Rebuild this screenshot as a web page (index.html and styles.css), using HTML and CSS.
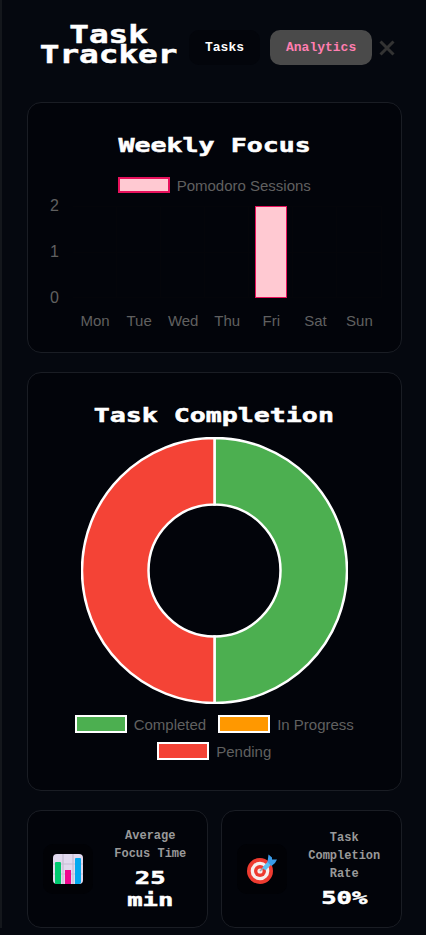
FILE: index.html
```html
<!DOCTYPE html>
<html>

<head>
    <meta charset="UTF-8">
    <meta name="viewport" content="width=device-width, initial-scale=1.0">
    <title>Task Tracker</title>
    <link rel="stylesheet" href="styles.css">
</head>

<body>
    <div class="app">
        <header class="top-bar">
            <div class="logo-box">
                <h1 class="logo">Task<br>Tracker</h1>
            </div>
            <nav class="tabs">
                <button class="tab">Tasks</button>
                <button class="tab active">Analytics</button>
            </nav>
            <svg class="close-icon" viewBox="0 0 16 16" width="16" height="16">
                <path d="M1.5 1.5 L14.5 14.5 M14.5 1.5 L1.5 14.5" />
            </svg>
        </header>

        <!-- Weekly bar chart -->
        <section class="card focus-card">
            <h2 class="card-title">Weekly Focus</h2>
            <div class="legend">
                <div class="legend-item">
                    <span class="swatch swatch-pink"></span>Pomodoro Sessions
                </div>
            </div>
            <div class="bar-chart">
                <div class="y-axis">
                    <span>2</span>
                    <span>1</span>
                    <span>0</span>
                </div>
                <div class="plot">
                    <div class="day"></div>
                    <div class="day"></div>
                    <div class="day"></div>
                    <div class="day"></div>
                    <div class="day"><div class="bar"></div></div>
                    <div class="day"></div>
                    <div class="day"></div>
                </div>
                <div class="corner"></div>
                <div class="x-axis">
                    <span>Mon</span>
                    <span>Tue</span>
                    <span>Wed</span>
                    <span>Thu</span>
                    <span>Fri</span>
                    <span>Sat</span>
                    <span>Sun</span>
                </div>
            </div>
        </section>

        <!-- Completion doughnut -->
        <section class="card completion-card">
            <h2 class="card-title">Task Completion</h2>
            <svg class="donut" viewBox="0 0 267 267" width="267" height="267">
                <path class="slice-green" d="M133.5 1 A132.5 132.5 0 0 1 133.5 266 L133.5 199.5 A66 66 0 0 0 133.5 67.5 Z" />
                <path class="slice-red" d="M133.5 266 A132.5 132.5 0 0 1 133.5 1 L133.5 67.5 A66 66 0 0 0 133.5 199.5 Z" />
            </svg>
            <div class="legend legend-wrap">
                <div class="legend-item">
                    <span class="swatch swatch-green"></span>Completed
                </div>
                <div class="legend-item">
                    <span class="swatch swatch-orange"></span>In Progress
                </div>
                <div class="legend-item">
                    <span class="swatch swatch-red"></span>Pending
                </div>
            </div>
        </section>

        <div class="stats">
            <section class="card stat-card">
                <div class="stat-icon">
                    <svg viewBox="0 0 30 30" width="30" height="30">
                        <rect x="0" y="0" width="30" height="30" rx="4" fill="#e1d9ee" />
                        <path d="M0 10 H30 M0 20 H30 M10 0 V30 M20 0 V30" stroke="#c5bdd3" stroke-width="1.2" />
                        <path d="M2 30 V9 Q2 8 3 8 H7 Q8 8 8 9 V30 Z" fill="#00c96f" />
                        <rect x="12" y="16" width="6" height="14" fill="#f0078f" />
                        <path d="M22 30 V5 Q22 4 23 4 H27 Q28 4 28 5 V28 Q28 30 26 30 Z" fill="#03a9f0" />
                    </svg>
                </div>
                <div class="stat-text">
                    <p class="stat-label">Average Focus Time</p>
                    <p class="stat-value">25<br>min</p>
                </div>
            </section>
            <section class="card stat-card">
                <div class="stat-icon">
                    <svg viewBox="0 0 30 30" width="30" height="30">
                        <circle cx="13" cy="17" r="13" fill="#ee3b30" />
                        <circle cx="13" cy="17" r="9.3" fill="#f6efee" />
                        <circle cx="13" cy="17" r="6" fill="#ee3b30" />
                        <circle cx="13" cy="17" r="2.6" fill="#f6efee" />
                        <path d="M13 17 L19 11.5" stroke="#8fa9ba" stroke-width="1.6" />
                        <path d="M15.5 13.5 L23 5 L26 8.5 L18.5 16.5 Z" fill="#5cc0f2" />
                        <path d="M20.5 8 L21.5 0.5 L25 3.5 L25 5.5 L30 5.5 L28 9 L24.5 12 Z" fill="#3a9be8" />
                    </svg>
                </div>
                <div class="stat-text">
                    <p class="stat-label">Task Completion Rate</p>
                    <p class="stat-value">50%</p>
                </div>
            </section>
        </div>
    </div>
</body>

</html>
```

FILE: styles.css
```css
/* Basic reset */
* {
    margin: 0;
    padding: 0;
    box-sizing: border-box;
}

html,
body {
    overflow: hidden;
}

body {
    background-color: #05080f;
    border-left: 2px solid #14171c;
    color: #fff;
    font-family: "Liberation Sans", Arial, sans-serif;
}

.app {
    display: flex;
    flex-direction: column;
    gap: 19px;
    padding: 0 24.5px 0 25px;
}

/* Header */
.top-bar {
    display: flex;
    align-items: center;
    height: 95px;
    margin-bottom: -12px;
    padding-left: 13px;
}

.logo-box {
    display: flex;
    justify-content: center;
    width: 138px;
    margin-bottom: 5px;
}

.logo {
    font-family: "DejaVu Sans Mono", monospace;
    font-size: 24px;
    font-weight: 700;
    line-height: 20px;
    text-align: center;
    white-space: nowrap;
    transform: scaleX(1.36);
    -webkit-text-stroke: 0.5px #fff;
}

.tabs {
    display: flex;
    gap: 10px;
    margin-left: 11px;
}

.tab {
    height: 35px;
    padding: 0 16px;
    background-color: #03050b;
    border: none;
    border-radius: 10px;
    color: #fff;
    font-family: "Liberation Mono", monospace;
    font-size: 13px;
    font-weight: 700;
}

.tab.active {
    background-color: #4a4a4a;
    color: #ff7eb0;
}

.close-icon {
    margin-left: 7px;
    fill: none;
    stroke: #333;
    stroke-width: 3;
}

/* Cards */
.card {
    background-color: #02040a;
    border: 1px solid #1a1d24;
    border-radius: 14px;
}

.card-title {
    width: fit-content;
    margin: 0 auto;
    font-family: "DejaVu Sans Mono", monospace;
    font-size: 19px;
    font-weight: 700;
    line-height: 22px;
    text-align: center;
    transform: scaleX(1.4);
    -webkit-text-stroke: 0.5px #fff;
}

.focus-card {
    height: 251px;
    padding-top: 31px;
}

.completion-card {
    height: 419px;
    padding-top: 31px;
}

/* Legends */
.legend {
    display: flex;
    justify-content: center;
    margin-top: 17px;
    font-size: 15px;
    color: #606060;
}

.legend-wrap {
    flex-wrap: wrap;
    gap: 3px 12px;
    margin-top: 8px;
    padding: 0 20px;
}

.legend-item {
    display: flex;
    align-items: center;
    gap: 7px;
    height: 24px;
}

.swatch {
    width: 52px;
    height: 18px;
    border: 2px solid #fff;
}

.swatch-pink {
    height: 16px;
    background-color: #ffc9d2;
    border-color: #e8115c;
}

.swatch-green {
    background-color: #4caf50;
}

.swatch-orange {
    background-color: #ff9800;
}

.swatch-red {
    background-color: #f44336;
}

/* Bar chart */
.bar-chart {
    display: grid;
    grid-template-columns: 32px 1fr;
    grid-template-rows: 92px 44px;
    margin: 9px 19px 0 13px;
    color: #606060;
    font-size: 15px;
}

.y-axis {
    display: flex;
    flex-direction: column;
    justify-content: space-between;
    margin: -8px 0;
    padding-left: 9px;
    font-size: 16px;
    line-height: 16px;
}

.plot {
    display: grid;
    grid-template-columns: repeat(7, 1fr);
    background-image: linear-gradient(#04050a, #04050a);
    background-size: 100% 1px;
    background-position: 0 50%;
    background-repeat: no-repeat;
    border-top: 1px solid #04050a;
    border-bottom: 1px solid #04050a;
}

.day {
    display: flex;
    justify-content: center;
    align-items: flex-end;
    border-right: 1px solid #04050a;
}

.bar {
    width: 32px;
    height: calc(100% + 2px);
    margin: 0 0 -1px 1px;
    background-color: #ffc9d2;
    border: 1px solid #e8115c;
}

.x-axis {
    display: grid;
    grid-template-columns: repeat(7, 1fr);
    align-items: center;
    text-align: center;
    white-space: nowrap;
}

/* Doughnut */
.donut {
    display: block;
    margin: 11px auto 0;
}

.slice-green,
.slice-red {
    stroke: #fff;
    stroke-width: 2.5;
}

.slice-green {
    fill: #4caf50;
}

.slice-red {
    fill: #f44336;
}

/* Stat cards */
.stats {
    display: grid;
    grid-template-columns: 1fr 1fr;
    gap: 13.5px;
}

.stat-card {
    display: flex;
    align-items: center;
    height: 118px;
    padding: 0 13px 0 15px;
    gap: 14px;
}

.stat-icon {
    display: flex;
    flex: none;
    align-items: center;
    justify-content: center;
    width: 50px;
    height: 50px;
    background-color: #010206;
    border-radius: 10px;
}

.stat-text {
    flex: 1;
    text-align: center;
}

.stat-label {
    color: #999;
    font-family: "Liberation Mono", monospace;
    font-size: 12px;
    font-weight: 700;
    line-height: 18px;
}

.stat-value {
    width: fit-content;
    margin: 4px auto 0;
    font-family: "DejaVu Sans Mono", monospace;
    font-size: 18px;
    font-weight: 700;
    line-height: 22px;
    transform: scaleX(1.42);
    -webkit-text-stroke: 0.5px #fff;
}
```
